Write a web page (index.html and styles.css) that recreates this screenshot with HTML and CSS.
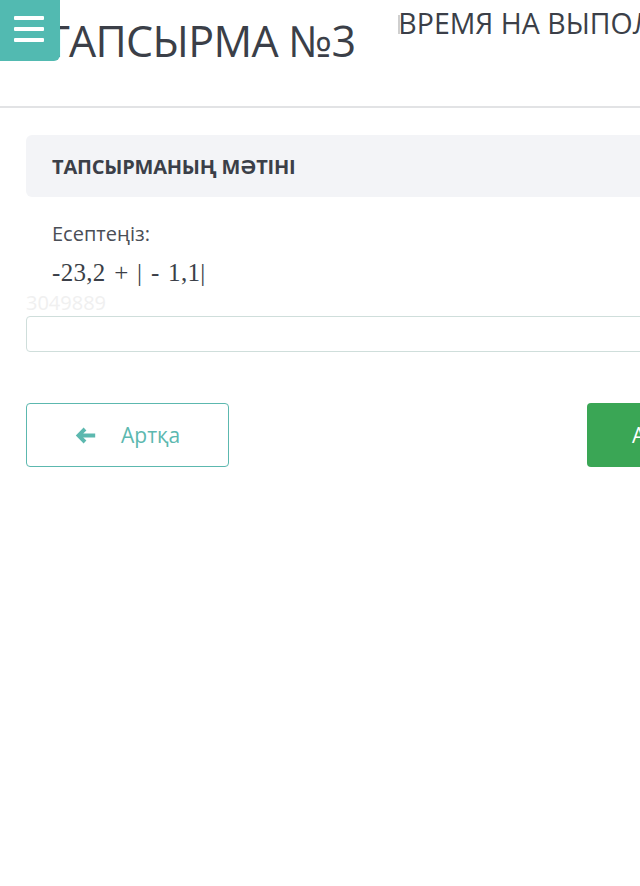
FILE: index.html
```html
<!DOCTYPE html>
<html lang="kk">
<head>
<meta charset="utf-8">
<link rel="stylesheet" href="styles.css">
</head>
<body>
<button class="menu-toggle" aria-label="menu">
  <span class="bar"></span><span class="bar"></span><span class="bar"></span>
</button>
<div class="page">
  <header class="top">
    <h1 class="title">ТАПСЫРМА №3</h1>
    <div class="timer">ВРЕМЯ НА ВЫПОЛНЕНИЕ</div>
  </header>
  <main class="content">
    <div class="card-head">ТАПСЫРМАНЫҢ МӘТІНІ</div>
    <div class="task">
      <p class="task-label">Есептеңіз:</p>
      <p class="math">-23,2 + | - 1,1|</p>
    </div>
    <div class="task-id">3049889</div>
    <input class="answer" type="text">
    <div class="actions">
      <button class="btn btn-back">
        <svg class="arrow" width="21" height="17" viewBox="0 0 21 17"><path d="M8.6 0.6 L0.8 8.5 L8.6 16.4 L11.4 13.6 L8.2 10.6 H20.2 V6.4 H8.2 L11.4 3.4 Z" fill="#5cb8af"/></svg>
        <span>Артқа</span>
      </button>
      <button class="btn btn-next">Алға</button>
    </div>
  </main>
</div>
</body>
</html>
```

FILE: styles.css
```css
html, body {
  margin: 0;
  padding: 0;
  overflow: hidden;
  background: #fff;
}
body {
  font-family: "Open Sans", "Liberation Sans", sans-serif;
  color: #3b3f48;
  width: 640px;
  height: 886px;
}
.page {
  width: 1100px;
}
.menu-toggle {
  position: absolute;
  left: 0;
  top: 0;
  width: 60px;
  height: 61px;
  border: none;
  padding: 16px 0 0 14px;
  background: #52bab1;
  border-radius: 0 0 6px 0;
  display: flex;
  flex-direction: column;
  gap: 7px;
  z-index: 2;
}
.menu-toggle .bar {
  display: block;
  width: 30px;
  height: 4px;
  background: #fff;
  border-radius: 1px;
}
.top {
  display: flex;
  align-items: flex-start;
  height: 106px;
  border-bottom: 2px solid #e2e3e5;
}
.title {
  margin: 0;
  padding: 11px 0 0 46px;
  font-size: 43px;
  font-weight: 400;
  line-height: 60px;
  letter-spacing: -0.7px;
  color: #3b3f48;
  white-space: nowrap;
}
.timer {
  position: relative;
  margin-left: 43px;
  padding-top: 3px;
  font-size: 28.5px;
  line-height: 40px;
  color: #3b3f48;
  white-space: nowrap;
}
.timer::before {
  content: "";
  position: absolute;
  left: 0;
  top: 15px;
  width: 2px;
  height: 19px;
  background: #cfcfcf;
}
.content {
  padding: 27px 0 0 26px;
}
.card-head {
  height: 62px;
  background: #f3f4f7;
  border-radius: 6px;
  padding-left: 26px;
  display: flex;
  align-items: center;
  font-size: 20px;
  font-weight: 700;
  color: #3b3f48;
  letter-spacing: -0.2px;
}
.task {
  padding: 22px 0 0 26px;
}
.task-label {
  margin: 0;
  font-size: 20px;
  line-height: 30px;
  color: #4a4e56;
}
.math {
  margin: 8px 0 0;
  font-family: "Liberation Serif", "DejaVu Serif", serif;
  font-size: 25px;
  line-height: 32px;
  word-spacing: 2px;
  letter-spacing: 0.3px;
  color: #3b3f48;
}
.task-id {
  font-size: 20px;
  line-height: 24px;
  color: #f0f0f0;
  height: 20px;
  margin-top: 2px;
  margin-bottom: 5px;
}
.answer {
  display: block;
  box-sizing: border-box;
  width: 1000px;
  height: 36px;
  margin: 0;
  border: 1px solid #cfdedb;
  border-radius: 4px;
  background: #fff;
}
.actions {
  display: flex;
  gap: 358px;
  margin-top: 51px;
}
.btn {
  box-sizing: border-box;
  height: 64px;
  border-radius: 4px;
  font-family: "Open Sans", "Liberation Sans", sans-serif;
  font-size: 21px;
  display: flex;
  align-items: center;
}
.btn-back {
  width: 203px;
  border: 1px solid #5cb8af;
  background: #fff;
  color: #5cb8af;
  padding-left: 48px;
  gap: 25px;
}
.btn-next {
  width: 200px;
  border: none;
  background: #3aa655;
  color: #fff;
  padding-left: 45px;
}
```
